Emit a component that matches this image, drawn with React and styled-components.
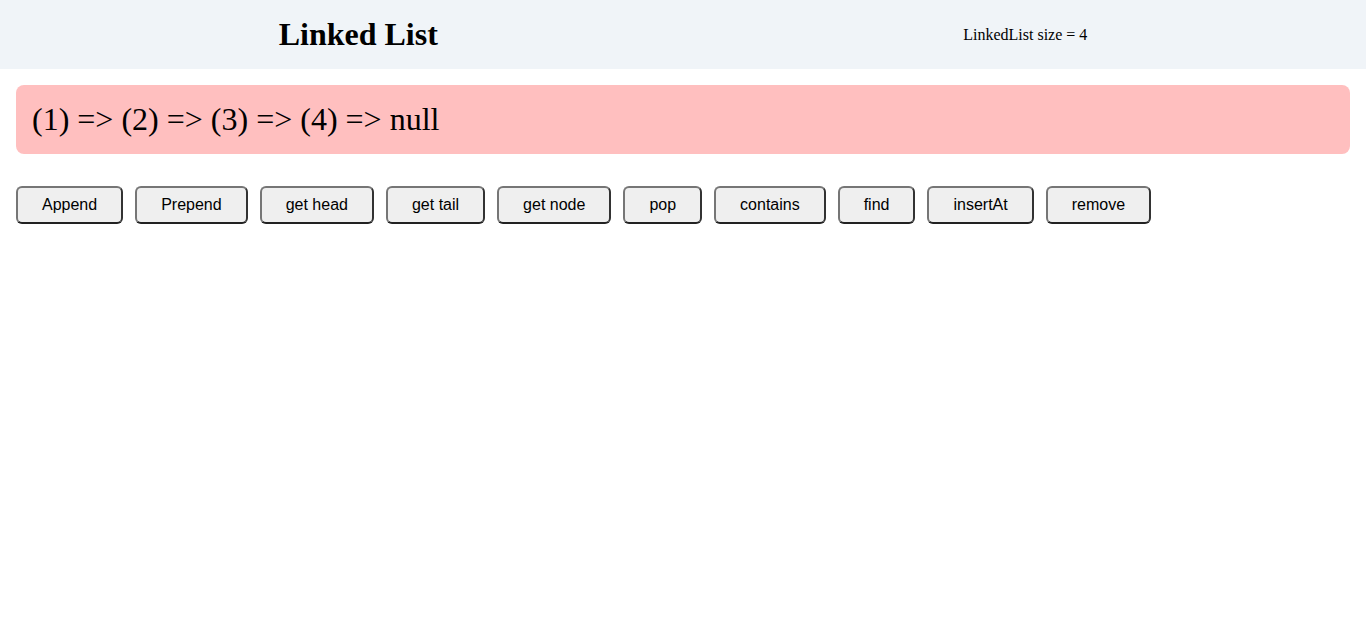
import styled, { createGlobalStyle } from "styled-components";

const GlobalStyle = createGlobalStyle`
    body {
        margin: 0;
        font-family: "Liberation Serif", "Times New Roman", serif;
        background: #ffffff;
        color: #000000;
    }
`;

const Header = styled.header`
    display: flex;
    justify-content: space-around;
    align-items: center;
    height: 69px;
    padding: 0 16px;
    background-color: #f0f4f8;
`;

const Title = styled.h1`
    margin: 0;
    font-size: 32px;
    font-weight: bold;
`;

const Size = styled.div`
    font-size: 16px;
`;

const Main = styled.main`
    display: flex;
    flex-direction: column;
    gap: 32px;
    padding: 16px;
`;

const Chain = styled.div`
    display: flex;
    align-items: center;
    height: 69px;
    padding: 0 16px;
    border-radius: 8px;
    background-color: #ffbfbf;
    font-size: 32px;
`;

const Buttons = styled.div`
    display: flex;
    flex-wrap: wrap;
    gap: 12px;
`;

const Button = styled.button`
    height: 38px;
    padding: 0 24px;
    font-family: "Liberation Sans", Arial, sans-serif;
    font-size: 16px;
    color: #000;
    background-color: #efefef;
    border: 2px solid;
    border-color: #767676 #333333 #222222 #767676;
    border-radius: 6px;
    cursor: pointer;
`;

const nodes = [1, 2, 3, 4];
const actions = ["Append", "Prepend", "get head", "get tail", "get node", "pop", "contains", "find", "insertAt", "remove"];

export default function App() {
    return (
        <>
            <GlobalStyle />
            <Header>
                <Title>Linked List</Title>
                <Size>LinkedList size = {nodes.length}</Size>
            </Header>
            <Main>
                <Chain>{nodes.map((n) => `(${n}) => `).join("")}null</Chain>
                <Buttons>
                    {actions.map((a) => (
                        <Button key={a}>{a}</Button>
                    ))}
                </Buttons>
            </Main>
        </>
    );
}
